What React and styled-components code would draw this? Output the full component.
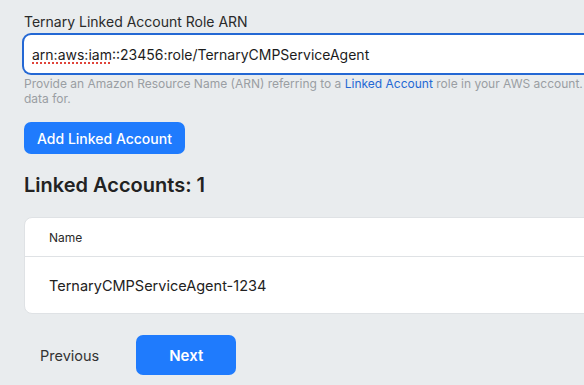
import { createGlobalStyle, styled } from "styled-components";

const GlobalStyle = createGlobalStyle`
  html, body {
    margin: 0;
    padding: 0;
    background: #e9ecee;
    overflow: hidden;
  }
  body {
    font-family: Inter, "Noto Sans", sans-serif;
    color: #222;
  }
`;

const Page = styled.div`
  width: 780px;
  padding: 13px 0 0 24px;
  box-sizing: border-box;
`;

const Label = styled.div`
  font-size: 14px;
  line-height: 17px;
  color: #2a2a2a;
  margin-bottom: 5px;
`;

// focused text field: the blue ring sits 2px outside the box
const Field = styled.div`
  height: 38px;
  box-sizing: border-box;
  border-radius: 7px;
  background: #fff;
  box-shadow: 0 0 0 2px #2468d4;
  display: flex;
  align-items: center;
  padding: 0 0 0 8px;
  font-size: 14px;
  color: #1c1c1c;
  white-space: nowrap;
`;

const Misspelled = styled.span`
  text-decoration: underline dotted #e0443a;
  text-decoration-thickness: 2px;
  text-underline-offset: 3px;
`;

const Help = styled.p`
  margin: 3px 0 0 0;
  font-size: 12px;
  line-height: 15px;
  color: #9a9ea3;
`;

const HelpLink = styled.a`
  color: #2468d4;
  text-decoration: none;
`;

const PrimaryButton = styled.button`
  display: block;
  border: 0;
  border-radius: 7px;
  background: #1f7bfd;
  color: #fff;
  font-family: inherit;
  font-size: ${(p) => (p.$big ? "15px" : "14px")};
  font-weight: ${(p) => (p.$big ? 600 : 500)};
  height: ${(p) => (p.$big ? "40px" : "32px")};
  width: ${(p) => (p.$big ? "100px" : "161px")};
  padding: 0;
  cursor: pointer;
`;

const AddWrap = styled.div`
  margin-top: 16px;
`;

const Heading = styled.h2`
  margin: 19px 0 0 0;
  font-size: 20px;
  line-height: 24px;
  font-weight: 600;
  color: #222;
`;

const Card = styled.div`
  margin-top: 20px;
  background: #fff;
  border: 1px solid #dfe2e5;
  border-radius: 8px;
  overflow: hidden;
`;

const HeadRow = styled.div`
  height: 38px;
  display: flex;
  align-items: center;
  padding-left: 24px;
  font-size: 12px;
  color: #2a2a2a;
  border-bottom: 1px solid #dfe2e5;
`;

const Row = styled.div`
  height: 56px;
  display: flex;
  align-items: center;
  padding-left: 24px;
  font-size: 14.5px;
  color: #222;
`;

const Footer = styled.div`
  display: flex;
  align-items: center;
  gap: 21px;
  margin-top: 21px;
`;

const GhostButton = styled.button`
  border: 0;
  background: transparent;
  font-family: inherit;
  font-size: 14.5px;
  color: #333;
  height: 40px;
  padding: 0 16px;
  cursor: pointer;
`;

export default function App() {
  return (
    <>
      <GlobalStyle />
      <Page>
        <Label>Ternary Linked Account Role ARN</Label>
        <Field>
          <Misspelled>arn:aws:iam</Misspelled>::23456:role/TernaryCMPServiceAgent
        </Field>
        <Help>
          Provide an Amazon Resource Name (ARN) referring to a{" "}
          <HelpLink>Linked Account</HelpLink> role in your AWS account.
          <br />
          data for.
        </Help>
        <AddWrap>
          <PrimaryButton>Add Linked Account</PrimaryButton>
        </AddWrap>
        <Heading>Linked Accounts: 1</Heading>
        <Card>
          <HeadRow>Name</HeadRow>
          <Row>TernaryCMPServiceAgent-1234</Row>
        </Card>
        <Footer>
          <GhostButton>Previous</GhostButton>
          <PrimaryButton $big>Next</PrimaryButton>
        </Footer>
      </Page>
    </>
  );
}
